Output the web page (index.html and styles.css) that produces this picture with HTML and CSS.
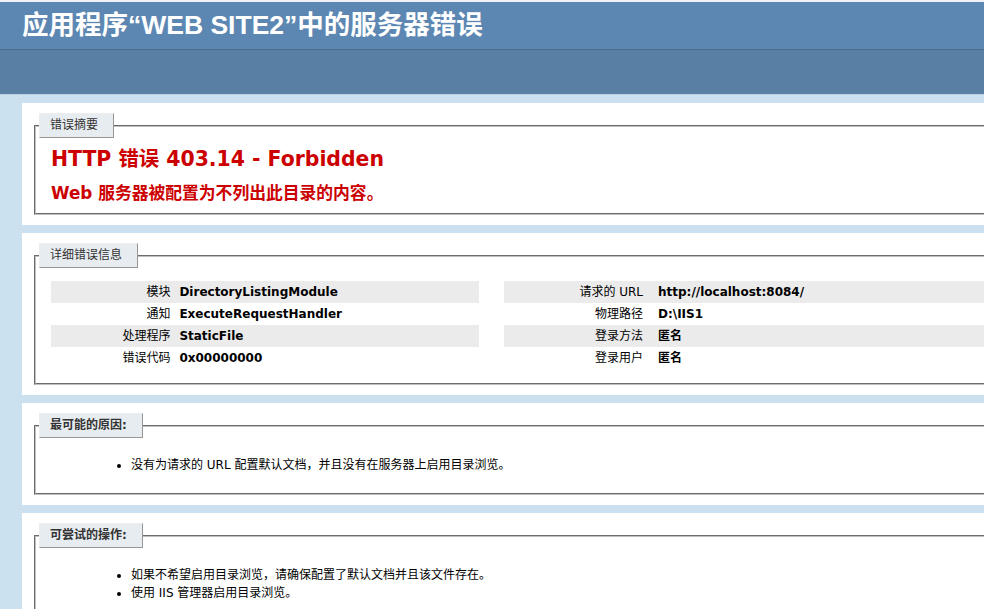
FILE: index.html
```html
<!DOCTYPE html>
<html lang="zh-CN">
    <head>
        <meta charset="utf-8">
        <title>IIS 详细错误 - 403.14 - Forbidden</title>
        <link rel="stylesheet" href="styles.css">
    </head>
    <body>
    <div class="header"><h1>应用程序“WEB SITE2”中的服务器错误</h1></div>
    <div class="serverVersion"><p></p></div>
    <div class="content">
        <div class="panel">
            <div class="box boxSummary">
                <div class="legend">错误摘要</div>
                <h2>HTTP 错误 403.14 - Forbidden</h2>
                <h3>Web 服务器被配置为不列出此目录的内容。</h3>
            </div>
        </div>
        <div class="panel">
            <div class="box">
                <div class="legend">详细错误信息</div>
                <div class="details">
                    <table class="detailsLeft">
                        <tr class="alt"><th>模块</th><td>DirectoryListingModule</td></tr>
                        <tr><th>通知</th><td>ExecuteRequestHandler</td></tr>
                        <tr class="alt"><th>处理程序</th><td>StaticFile</td></tr>
                        <tr><th>错误代码</th><td>0x00000000</td></tr>
                    </table>
                    <table class="detailsRight">
                        <tr class="alt"><th>请求的 URL</th><td>http://localhost:8084/</td></tr>
                        <tr><th>物理路径</th><td>D:\IIS1</td></tr>
                        <tr class="alt"><th>登录方法</th><td>匿名</td></tr>
                        <tr><th>登录用户</th><td>匿名</td></tr>
                    </table>
                </div>
            </div>
        </div>
        <div class="panel">
            <div class="box boxList">
                <div class="legend bold">最可能的原因:</div>
                <ul>
                    <li>没有为请求的 URL 配置默认文档，并且没有在服务器上启用目录浏览。</li>
                </ul>
            </div>
        </div>
        <div class="panel">
            <div class="box boxList">
                <div class="legend bold">可尝试的操作:</div>
                <ul>
                    <li>如果不希望启用目录浏览，请确保配置了默认文档并且该文件存在。</li>
                    <li>使用 IIS 管理器启用目录浏览。</li>
                </ul>
            </div>
        </div>
    </div>
    </body>
</html>
```
FILE: styles.css
```css
html{overflow:hidden;}
body{
    margin:0;
    font-size:12px;
    font-family:"DejaVu Sans","Noto Sans CJK SC",sans-serif;
    background:#CBE1EF;
}
.header{
    border-top:2px solid #eef2f6;
    padding:6px 22px;
    background-color:#5C87B2;
    color:#FFF;
}
h1{
    margin:0;
    font-size:26.5px;
    line-height:35px;
    font-family:"Liberation Sans","Noto Sans CJK SC",sans-serif;
    font-weight:bold;
    white-space:nowrap;
}
.serverVersion{
    height:44px;
    background-color:#5A7FA5;
    border-top:1px solid #4A6C8E;
    border-bottom:1px solid #C1CFDD;
}
.serverVersion p{margin:0;}
.content{margin-left:22px;}
.panel{
    width:1270px;
    margin-top:8px;
    padding:10px;
    background:#FFF;
}
.box{
    display:flex;
    flex-direction:column;
    margin:12px 2px 0 2px;
    padding:0 15px 10px 15px;
    border:2px groove #c0c0c0;
}
.boxSummary,.boxList{padding-bottom:9px;}
.legend{
    align-self:flex-start;
    margin:-14px 0 8px -12px;
    padding:4px 15px 4px 10px;
    line-height:15px;
    color:#333333;
    background:#E7ECF0;
    border-top:1px solid #EDEDED;
    border-left:1px solid #EDEDED;
    border-right:1px solid #969696;
    border-bottom:1px solid #969696;
    white-space:nowrap;
}
.bold{font-weight:bold;}
h2{
    margin:0;
    font-size:20.4px;
    line-height:26px;
    color:#CC0000;
}
h3{
    margin:10px 0 0 0;
    font-size:16.8px;
    line-height:22px;
    color:#CC0000;
}
.details{display:flex;gap:25px;}
table{
    margin:5px 0 4px 0;
    border:none;
    border-collapse:collapse;
}
.detailsLeft{width:428px;flex:none;}
.detailsRight{width:770px;flex:none;}
th,td{
    padding:3px 0;
    line-height:16px;
    text-align:left;
    vertical-align:top;
    white-space:nowrap;
}
th{
    width:30%;
    padding-right:9px;
    text-align:right;
    font-weight:normal;
}
.detailsRight th{width:20%;padding-right:15px;}
td{font-weight:bold;}
tr.alt th,tr.alt td{background-color:#ebebeb;}
ul{
    margin:10px 0 10px 40px;
    padding-left:40px;
}
li{line-height:18px;}
```
